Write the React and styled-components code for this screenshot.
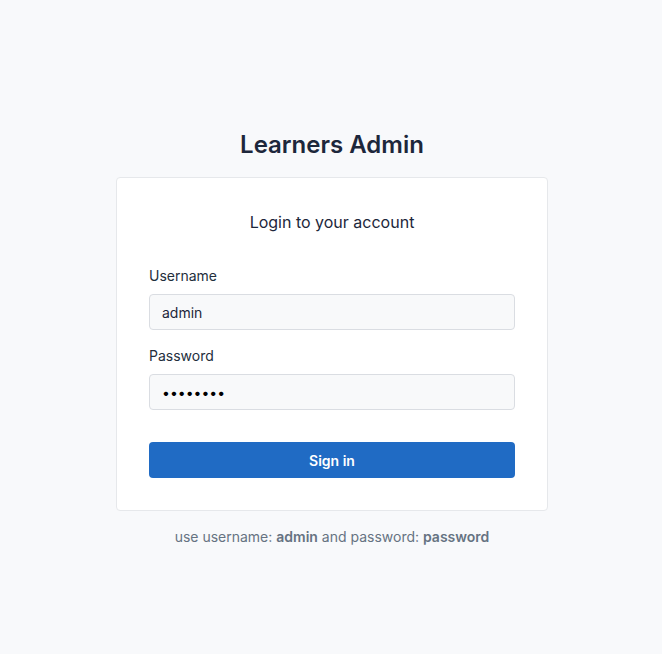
import React from "react";
import styled, { createGlobalStyle } from "styled-components";

const Global = createGlobalStyle`
  html, body { margin: 0; padding: 0; }
  body {
    background: #f8f9fb;
    font-family: Inter, "Noto Sans", sans-serif;
    color: #1d273b;
    -webkit-font-smoothing: antialiased;
  }
  * { box-sizing: border-box; }
`;

const Page = styled.div`
  display: flex;
  flex-direction: column;
  align-items: center;
  padding: 129px 0 0 2px;
  min-height: 654px;
`;

const Title = styled.h1`
  margin: 0 0 16px;
  font-size: 24px;
  line-height: 32px;
  font-weight: 600;
  color: #1d273b;
`;

const Card = styled.form`
  width: 432px;
  background: #fff;
  border: 1px solid #e6e8eb;
  border-radius: 4px;
  padding: 32px;
  display: flex;
  flex-direction: column;
`;

const CardTitle = styled.h2`
  margin: 0 0 32px;
  text-align: center;
  font-size: 16px;
  line-height: 24px;
  font-weight: 400;
  color: #1d273b;
`;

const Field = styled.div`
  display: flex;
  flex-direction: column;
  margin-bottom: ${(p) => p.$mb}px;
`;

const Label = styled.label`
  font-size: 14px;
  line-height: 20px;
  font-weight: 400;
  color: #232e3c;
  margin-bottom: 8px;
`;

const Input = styled.input`
  height: 36px;
  width: 100%;
  padding: 0 12px;
  font-family: inherit;
  font-size: 14px;
  color: #1d273b;
  background: #f8f9fa;
  border: 1px solid #dadde2;
  border-radius: 4px;
  outline: none;
  &[type="password"] { color: #000; }
`;

const Button = styled.button`
  height: 36px;
  width: 100%;
  border: none;
  border-radius: 4px;
  background: #206bc4;
  color: #fff;
  font-family: inherit;
  font-size: 14px;
  font-weight: 600;
  cursor: pointer;
`;

const Hint = styled.p`
  margin: 16px 0 0;
  font-size: 14px;
  line-height: 20px;
  color: #667382;
  b { font-weight: 600; }
`;

export default function App() {
  return (
    <>
      <Global />
      <Page>
        <Title>Learners Admin</Title>
        <Card onSubmit={(e) => e.preventDefault()}>
          <CardTitle>Login to your account</CardTitle>
          <Field $mb={16}>
            <Label>Username</Label>
            <Input type="text" defaultValue="admin" />
          </Field>
          <Field $mb={32}>
            <Label>Password</Label>
            <Input type="password" defaultValue="password" />
          </Field>
          <Button type="submit">Sign in</Button>
        </Card>
        <Hint>
          use username: <b>admin</b> and password: <b>password</b>
        </Hint>
      </Page>
    </>
  );
}
